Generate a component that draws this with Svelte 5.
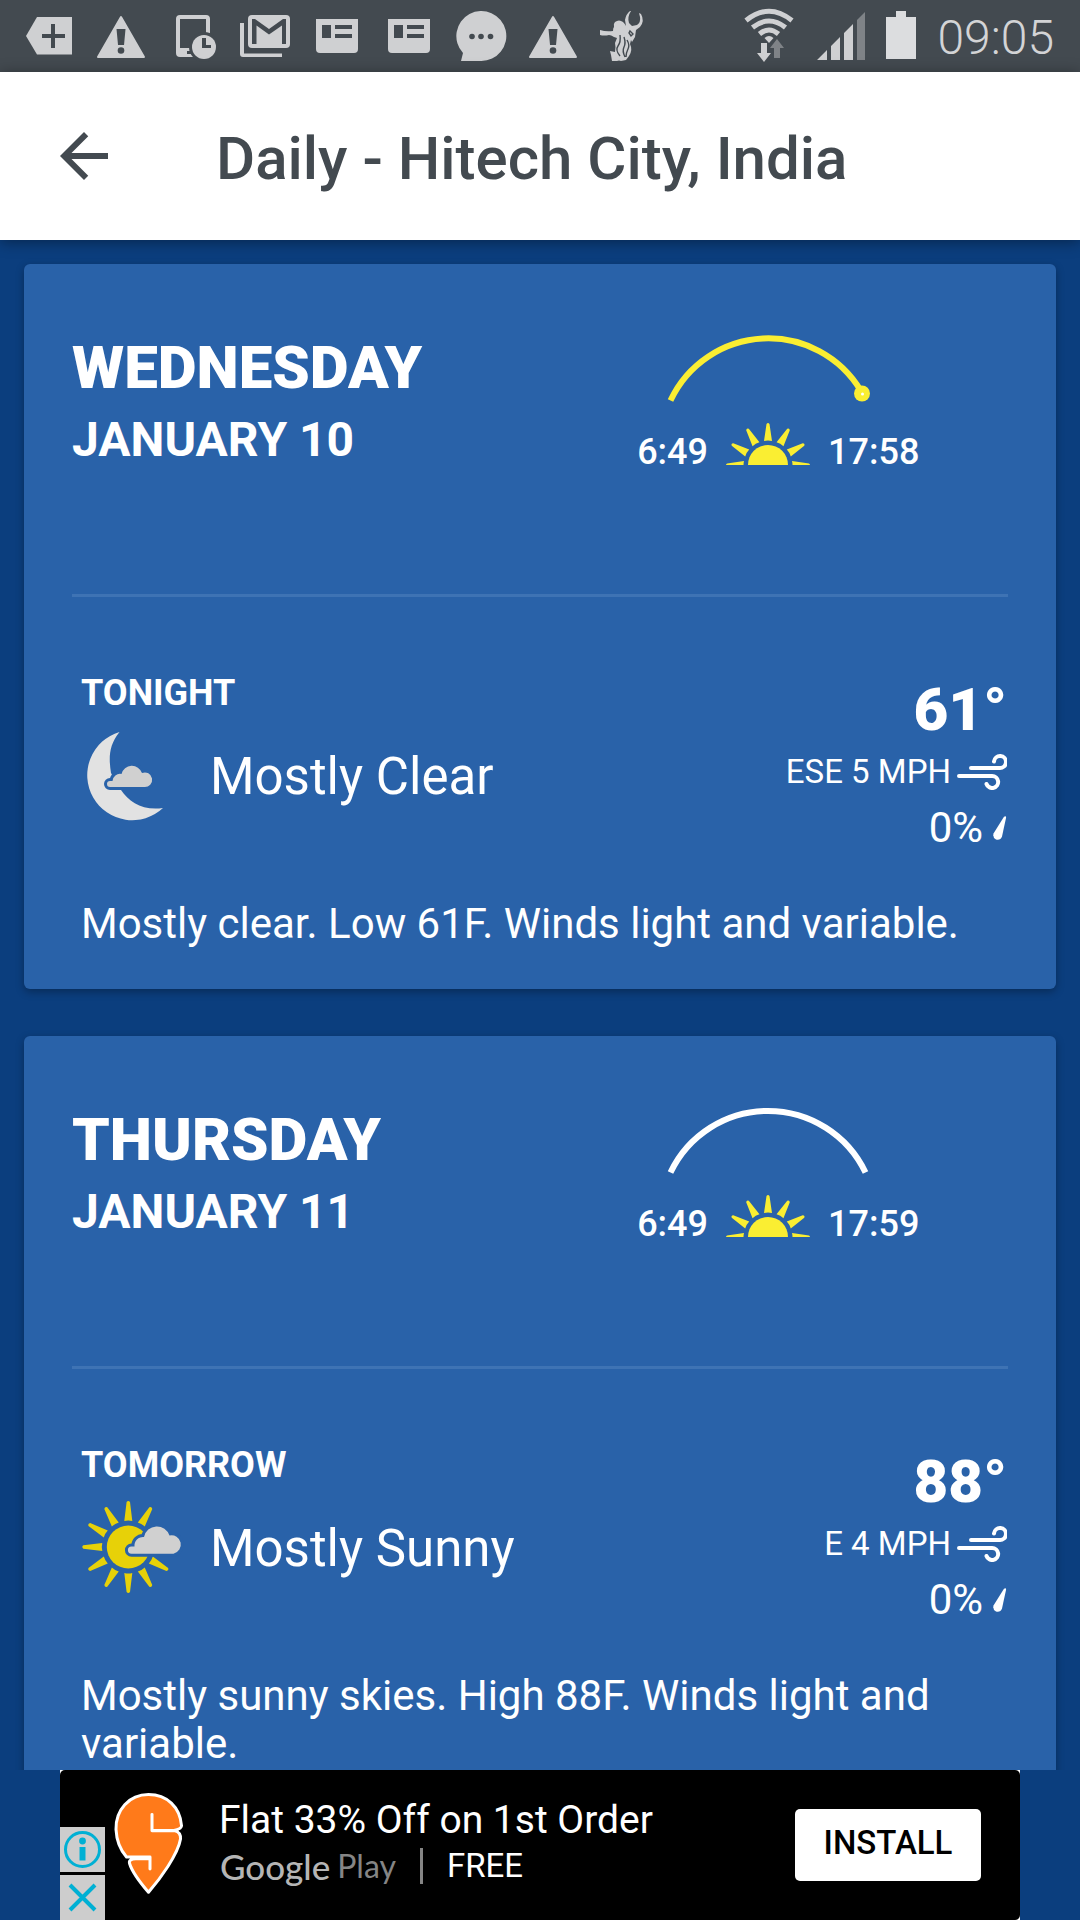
<script>
  const days = [
    {
      name: 'WEDNESDAY', date: 'JANUARY 10', rise: '6:49', set: '17:58', now: true,
      label: 'TONIGHT', icon: 'moon', sky: 'Mostly Clear', temp: '61°', wind: 'ESE 5 MPH', rain: '0%',
      text: 'Mostly clear. Low 61F. Winds light and variable.'
    },
    {
      name: 'THURSDAY', date: 'JANUARY 11', rise: '6:49', set: '17:59', now: false,
      label: 'TOMORROW', icon: 'sun', sky: 'Mostly Sunny', temp: '88°', wind: 'E 4 MPH', rain: '0%',
      text: 'Mostly sunny skies. High 88F. Winds light and variable.'
    }
  ];
  const halfRays = [-90, -60, -30, 0, 30, 60, 90];
  const sunRays = [0, 30, 120, 150, 180, 210, 240, 270, 300, 330];
</script>

{#snippet warn()}
  <svg class="note" viewBox="0 0 72 72" aria-hidden="true">
    <path class="lit lit-line" d="M36 17L59 57H13Z" />
    <path class="dark" d="M31.500 29h9l-1.500 16h-6z" />
    <circle class="dark" cx="36" cy="50.500" r="3.300" />
  </svg>
{/snippet}

{#snippet news()}
  <svg class="note" viewBox="0 0 72 72" aria-hidden="true">
    <path class="lit" d="M15 19H57V49a4 4 0 0 1-4 4H19a4 4 0 0 1-4-4Z" />
    <path class="dark" d="M21 25h9v13h-9zM34 25h17v4H34zM34 34h17v4H34z" />
  </svg>
{/snippet}

<div class="app">
  <div class="status">
    <div class="notes">
      <svg class="note" viewBox="0 0 72 72" aria-hidden="true">
        <path class="lit" d="M13 36L24 17H59V54.500H24Z" />
        <path class="dark" d="M29 34h9V24h4v10h10v4H42v10h-4V38h-9z" />
      </svg>
      {@render warn()}
      <svg class="note" viewBox="0 0 72 72" aria-hidden="true">
        <path class="lit" fill-rule="evenodd" d="M23 15H49a4 4 0 0 1 4 4V57H23a4 4 0 0 1-4-4V19a4 4 0 0 1 4-4ZM23 19V48H49V19Z" />
        <circle class="dark" cx="47" cy="47" r="15" />
        <path class="dark" d="M30 51h4v3h-4z" />
        <circle class="lit" cx="47" cy="47" r="12" />
        <path class="dark" d="M45 38h4v7h5v3h-9z" />
      </svg>
      <svg class="note" viewBox="0 0 72 72" aria-hidden="true">
        <path class="lit" d="M11 23h4v30.500h38V57H14a3 3 0 0 1-3-3z" />
        <rect class="lit" x="19" y="15" width="42" height="33" rx="4" />
        <path class="dark" d="M23 44V19h3l14 10 14-10h3v25h-4V25.500L40 34.500 27.500 25.500V44z" />
      </svg>
      {@render news()}
      {@render news()}
      <svg class="note" viewBox="0 0 72 72" aria-hidden="true">
        <path class="lit" d="M16 61l2-8A25 25 0 1 1 36 61Z" />
        <circle class="dark" cx="27" cy="36.500" r="2.800" />
        <circle class="dark" cx="36" cy="36.500" r="2.800" />
        <circle class="dark" cx="45.500" cy="36.500" r="2.800" />
      </svg>
      {@render warn()}
      <svg class="note" viewBox="0 0 72 72" aria-hidden="true">
        <path class="lit" d="M11 30q6 2 13 1q0-3 1-4q-1-3 1-5q4-3 8 0q2 2 3 4l-1-6q1-6 5-9l1 0q-4 6-2 12l3 3 5-1q4-3 3-8l-1-4 2 1q4 7-1 13l-4 3-1 7-3 5-1-2-1 4q3 6-1 12l-3 4-5 1-4-1 2 1h-7l-1-6-1-4 5 1q1-5 0-9l2-5-3-1q-3-2-5-2-5 1-9 0z" />
        <path class="dark-line" d="M31 35q1 7-2 11t2 10M35 37q2 6 0 10t1 10M38 40q3 5 1 9t-2 8M41 31l3 3-2 2-2-3z" />
      </svg>
    </div>
    <div class="system">
      <svg class="wifi" viewBox="744 0 50 72" aria-hidden="true">
        <path class="lit-arc" d="M746 20.500Q769 2 792 20.500M752.500 27.500Q769 14.500 785.500 27.500M759.500 34Q769 26 778.500 34" />
        <path class="lit" d="M764.500 38Q769 34 773.500 38L769 43ZM761 43h6v10h4l-7 9-7-9h4z" />
        <path class="dim" d="M777 39l7 9h-4v10h-6V48h-4z" />
      </svg>
      <svg class="signal" viewBox="817 0 48 72" aria-hidden="true">
        <path class="lit" d="M817 60l10-10v10zM831 60V46l9-9v23zM844 60V33l9-9v36z" />
        <path class="dim" d="M857 60V20l8-8v48z" />
      </svg>
      <svg class="battery" viewBox="886 0 30 72" aria-hidden="true">
        <path class="bright" d="M896 11h10v6h10v42h-30V17h10z" />
      </svg>
      <time>09:05</time>
    </div>
  </div>

  <header class="bar">
    <button class="back" aria-label="Back">
      <svg viewBox="0 0 24 24" aria-hidden="true"><path d="M20 11H7.830l5.590-5.590L12 4l-8 8 8 8 1.410-1.410L7.830 13H20z" /></svg>
    </button>
    <h1>Daily - Hitech City, India</h1>
  </header>

  <main>
    {#each days as d}
      <article>
        <div class="head">
          <div>
            <h2>{d.name}</h2>
            <p class="date">{d.date}</p>
          </div>
          <div class="daylight">
            <svg class="arc" class:now={d.now} viewBox="660 333 216 88" aria-hidden="true">
              {#if d.now}
                <path d="M670.500 400.500A108 108 0 0 1 861 391" />
                <circle class="yellow" cx="862" cy="393.500" r="8" />
                <circle class="spot" cx="862.500" cy="394" r="1.500" />
              {:else}
                <path d="M670.500 400.500A108 108 0 0 1 865.500 400.500" />
              {/if}
            </svg>
            <span class="rise">{d.rise}</span>
            <svg class="halfsun" viewBox="-43 -43 86 54" aria-hidden="true">
              <svg x="-43" y="-44" width="86" height="44" viewBox="-43 -44 86 44">
                <circle class="yellow" r="20" />
                {#each halfRays as a}
                  <path class="yellow" transform="rotate({a})" d="M-4 -24L-1.500 -41Q0 -43 1.500 -41L4 -24Q0 -25 -4 -24Z" />
                {/each}
              </svg>
            </svg>
            <span>{d.set}</span>
          </div>
        </div>

        <div class="details">
          <div>
            <h3>{d.label}</h3>
            <div class="sky">
              {#if d.icon === 'moon'}
                <svg viewBox="-2 1 104 96" aria-hidden="true">
                  <path class="moon" d="M36.500 4A45 45 0 1 0 80 80C60 83 46 74 38 62L28 45C26 32 25 18 36.500 4Z" />
                  <g class="cloud">
                    <path d="M27 59a3 3 0 0 1 0-6h2.500a7.500 7.500 0 0 1 9-7a10.700 10.700 0 0 1 20.500-1a7.300 7.300 0 1 1 2.300 14Z" />
                  </g>
                </svg>
              {:else}
                <svg viewBox="-1 1 104 96" aria-hidden="true">
                  <g class="gold" transform="translate(46.300 47)">
                    <circle r="21.500" />
                    {#each sunRays as a}
                      <path transform="rotate({a})" d="M-4 -26L-1.700 -45Q0 -47 1.700 -45L4 -26Q0 -27 -4 -26Z" />
                    {/each}
                  </g>
                  <g class="cloud">
                    <path d="M49.500 53.700a3.600 3.600 0 0 1 0-7.200h3a8.500 8.500 0 0 1 9.500-9.500a13.200 13.200 0 0 1 25.500-1.500a9.200 9.200 0 1 1 4 18.200Z" />
                  </g>
                </svg>
              {/if}
              <span>{d.sky}</span>
            </div>
          </div>
          <div class="stats">
            <strong>{d.temp}</strong>
            <p class="wind">
              {d.wind}
              <svg viewBox="0 0 50 36" aria-hidden="true"><path d="M14 14H42.500A6 6 0 1 0 37 7.500M2 22H35A6 6 0 1 1 29.500 30" /></svg>
            </p>
            <p class="rain">
              {d.rain}
              <svg viewBox="0 0 14 24" aria-hidden="true"><path d="M11 0.800Q13.500 -0.500 13 2L9 20.500Q7.500 24.500 3 23.500Q-0.500 22 0.500 17.500Z" /></svg>
            </p>
          </div>
        </div>
        <p class="text">{d.text}</p>
      </article>
    {/each}
  </main>

  <aside>
    <div class="frame">
      <div class="ad">
        <div class="choices">
          <button aria-label="Ad information">
            <svg viewBox="0 0 45 45" aria-hidden="true">
              <circle class="ring" cx="22.500" cy="22.500" r="17" />
              <circle class="cyan" cx="22.500" cy="14" r="3.400" />
              <path class="cyan" d="M19.500 20h6v13.500h-6z" />
            </svg>
          </button>
          <button aria-label="Close ad">
            <svg viewBox="0 0 45 45" aria-hidden="true"><path class="cross" d="M10 10L35 35M35 10L10 35" /></svg>
          </button>
        </div>
        <svg class="logo" viewBox="114 1736 70 106" aria-hidden="true">
          <path class="pin" transform="scale(1 0.968)" d="M152 1816.500V1833H174Q182 1831.500 181.500 1828C180 1809 167 1796 148.500 1796C129 1796 115.500 1812 116 1832C116.500 1843 121 1854 126.500 1860.500H150V1873V1862.500H136Q128.500 1862.500 129.500 1867C132 1876 141 1888 148.500 1897C160 1883 178 1858 180.500 1842Q181 1835 175 1833.500H152Z" />
        </svg>
        <div class="copy">
          <p>Flat 33% Off on 1st Order</p>
          <div class="store">
            <span class="google">Google</span><span class="play">Play</span>
            <span class="free">FREE</span>
          </div>
        </div>
        <button class="install">INSTALL</button>
      </div>
    </div>
  </aside>
</div>

<style>
  :global(body) { margin: 0; background: #0b3e7e; }
  .app {
    height: 100vh;
    display: flex;
    flex-direction: column;
    font-family: Roboto, "Liberation Sans", sans-serif;
    color: #fff;
    background: #0b3e7e;
  }
  h1, h2, h3, p { margin: 0; }
  svg { display: block; flex: none; }
  button { border: 0; padding: 0; font-family: inherit; cursor: pointer; }

  .status {
    flex: none;
    display: flex;
    justify-content: space-between;
    height: 72px;
    padding: 0 26px 0 13px;
    background: #434a50;
  }
  .notes, .system { display: flex; align-items: center; }
  .note { width: 72px; height: 72px; }
  .lit { fill: #cfd0d2; }
  .lit-line { stroke: #cfd0d2; stroke-width: 2; stroke-linejoin: round; }
  .lit-arc { fill: none; stroke: #cfd0d2; stroke-width: 5; }
  .dark { fill: #434a50; }
  .dark-line { fill: none; stroke: #434a50; stroke-width: 1.4; }
  .dim { fill: #7f8387; }
  .bright { fill: #dcdddf; }
  .wifi { width: 50px; height: 72px; margin-right: 23px; }
  .signal { width: 48px; height: 72px; margin-right: 21px; }
  .battery { width: 30px; height: 72px; margin-right: 21px; }
  time { padding-top: 4px; font-size: 48px; line-height: 68px; font-weight: 300; color: #d3d4d6; }

  .bar {
    flex: none;
    display: flex;
    align-items: center;
    gap: 96px;
    height: 168px;
    padding: 0 48px;
    background: #fff;
    color: #434a50;
    box-shadow: 0 2px 14px rgba(0, 0, 0, .4);
    z-index: 1;
  }
  .back { background: none; color: inherit; }
  .back svg { width: 72px; height: 72px; fill: currentColor; }
  h1 { padding-top: 6px; font-size: 60px; line-height: 72px; font-weight: 500; }

  main {
    flex: 1;
    min-height: 0;
    overflow: hidden;
    display: flex;
    flex-direction: column;
    gap: 47px;
    padding: 24px 24px 0;
  }
  article {
    flex: none;
    padding: 68px 48px 41px;
    border-radius: 6px;
    background: #2962a9;
    box-shadow: 0 3px 8px rgba(0, 0, 0, .3);
  }
  .head {
    display: grid;
    grid-template-columns: 1fr 480px;
    padding-bottom: 118px;
    border-bottom: 3px solid #3e73b4;
  }
  h2 { font-size: 60px; line-height: 72px; font-weight: 900; }
  .date { font-size: 48px; line-height: 72px; font-weight: 700; }
  .daylight {
    display: grid;
    grid-template-columns: 1fr auto 1fr;
    column-gap: 17px;
    align-items: end;
    font-size: 36px;
    line-height: 48px;
    font-weight: 500;
  }
  .arc {
    grid-column: 1 / -1;
    justify-self: center;
    width: 216px;
    height: 88px;
    fill: none;
    stroke: #fff;
    stroke-width: 6;
  }
  .arc.now { stroke: #faee32; }
  .yellow { fill: #faee32; stroke: none; }
  .spot { fill: #fff; stroke: none; }
  .rise { justify-self: end; }
  .halfsun { width: 86px; height: 54px; }

  .details {
    display: flex;
    justify-content: space-between;
    padding: 72px 1px 42px 9px;
  }
  h3 { font-size: 36px; line-height: 48px; font-weight: 700; }
  .sky {
    display: flex;
    align-items: center;
    gap: 25px;
    margin-top: 12px;
    font-size: 51px;
    line-height: 60px;
  }
  .sky svg { width: 104px; height: 96px; }
  .moon { fill: #e2e2e2; }
  .gold { fill: #e7d108; }
  .cloud { fill: #d0d0d0; stroke: #2962a9; stroke-width: 6; paint-order: stroke; }
  .stats {
    display: flex;
    flex-direction: column;
    align-items: flex-end;
    gap: 2px;
    padding-top: 5px;
  }
  strong { font-size: 60px; line-height: 72px; font-weight: 900; }
  .wind, .rain { display: flex; align-items: center; }
  .wind { gap: 6px; font-size: 33px; line-height: 48px; }
  .wind svg { width: 50px; height: 36px; fill: none; stroke: #fff; stroke-width: 4; stroke-linecap: round; }
  .rain { gap: 10px; font-size: 42px; line-height: 60px; }
  .rain svg { width: 14px; height: 24px; fill: #fff; }
  .text { padding-left: 9px; font-size: 42px; line-height: 48px; }

  aside { flex: none; padding: 0 60px; background: #0b3e7e; z-index: 1; }
  .frame { background: #fff; }
  .ad {
    display: flex;
    align-items: center;
    height: 150px;
    padding-right: 39px;
    border-radius: 5px;
    background: #000;
  }
  .choices {
    align-self: flex-end;
    display: flex;
    flex-direction: column;
    gap: 3px;
  }
  .choices button { flex: none; background: #cdcdcd; }
  .choices svg { width: 45px; height: 45px; }
  .ring, .cross { fill: none; stroke: #00b0d4; stroke-width: 3; }
  .cross { stroke-width: 4; }
  .cyan { fill: #00b0d4; }
  .logo { width: 70px; height: 106px; margin-left: 9px; }
  .pin { fill: #ff7a1a; stroke: #fff; stroke-width: 3; stroke-linejoin: round; }
  .copy { flex: 1; padding: 0 0 6px 35px; }
  .copy p { font-size: 39px; line-height: 48px; }
  .store { display: flex; align-items: center; height: 44px; padding-left: 1px; }
  .google, .play { font-family: Lato, sans-serif; line-height: 44px; }
  .google { font-size: 35px; font-weight: 500; color: #b5b5b5; }
  .play { margin-left: 7px; font-size: 32px; color: #858585; }
  .free {
    margin-left: 24px;
    padding-left: 24px;
    border-left: 3px solid #858585;
    font-size: 33px;
    line-height: 36px;
  }
  .install {
    width: 186px;
    height: 72px;
    padding-bottom: 6px;
    border-radius: 5px;
    background: #fff;
    color: #000;
    font-size: 33px;
    font-weight: 500;
  }
</style>
